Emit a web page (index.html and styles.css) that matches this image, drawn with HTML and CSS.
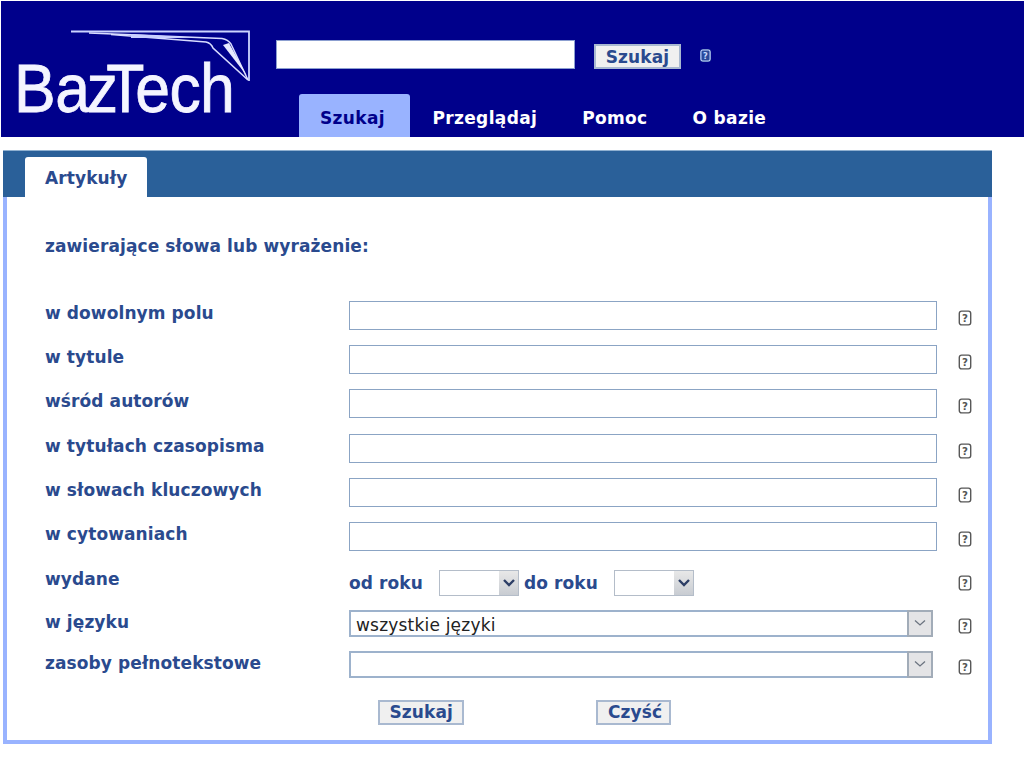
FILE: index.html
```html
<!DOCTYPE html>
<html lang="pl">
<head>
<meta charset="utf-8">
<title>BazTech</title>
<link rel="stylesheet" href="styles.css">
</head>
<body>
<svg class="defs" width="0" height="0" aria-hidden="true"><defs>
<symbol id="help" viewBox="0 0 12 14"><rect x="1" y="1" width="10" height="12" rx="2" fill="none" stroke="currentColor" stroke-width="1.2"/><text x="6" y="10.5" text-anchor="middle" class="help-q" fill="currentColor">?</text></symbol>
</defs></svg>
<header class="top">
  <svg class="logo" width="262" height="136" viewBox="0 0 262 136">
    <path d="M70 30.5H248V80" fill="none" stroke="#ccd4ff" stroke-width="1.8"/>
    <path d="M88 32L221 37.5Q227 38.5 230 43L247 79" fill="none" stroke="#d8dcff" stroke-width="1.5"/>
    <path d="M110 33.5L205 41Q210 42 212 47L247 79" fill="none" stroke="#d8dcff" stroke-width="1.6"/>
    <path d="M222 44L228 42L246 75Z" fill="#e8eaff"/>
    <path d="M130 33L200 37L130 37Z" fill="#c8ceff"/>
    <text transform="translate(13 111) scale(.92 1)" dx="0 -0.6 -3.6 -12.6 -10.2 -0.5 -1" class="logo-text">BazTech</text>
  </svg>
  <div class="top-main">
    <form class="quick">
      <input class="quick-input" type="text">
      <button class="btn" type="button">Szukaj</button>
      <svg class="help help-top"><use href="#help"/></svg>
    </form>
    <nav class="nav">
      <a class="nav-item active">Szukaj</a>
      <a class="nav-item">Przeglądaj</a>
      <a class="nav-item">Pomoc</a>
      <a class="nav-item">O bazie</a>
    </nav>
  </div>
</header>
<main class="panel">
  <div class="tabs"><a class="tab">Artykuły</a></div>
  <form class="body">
    <h2 class="lead">zawierające słowa lub wyrażenie:</h2>
    <div class="rows">
      <label class="lbl">w dowolnym polu</label><input class="field" type="text"><svg class="help"><use href="#help"/></svg>
      <label class="lbl">w tytule</label><input class="field" type="text"><svg class="help"><use href="#help"/></svg>
      <label class="lbl">wśród autorów</label><input class="field" type="text"><svg class="help"><use href="#help"/></svg>
      <label class="lbl">w tytułach czasopisma</label><input class="field" type="text"><svg class="help"><use href="#help"/></svg>
      <label class="lbl">w słowach kluczowych</label><input class="field" type="text"><svg class="help"><use href="#help"/></svg>
      <label class="lbl">w cytowaniach</label><input class="field" type="text"><svg class="help"><use href="#help"/></svg>
    </div>
    <div class="rows rows-low">
      <label class="lbl lbl-yr">wydane</label>
      <div class="years">
        <span class="yr-lbl">od roku</span>
        <div class="sel sel-yr"><select class="native"><option></option></select><span class="arrow-yr"><svg width="14" height="9" viewBox="0 0 14 9"><path d="M2 2L7 7L12 2" fill="none" stroke="#2c3e66" stroke-width="2.4"/></svg></span></div>
        <span class="yr-lbl">do roku</span>
        <div class="sel sel-yr"><select class="native"><option></option></select><span class="arrow-yr"><svg width="14" height="9" viewBox="0 0 14 9"><path d="M2 2L7 7L12 2" fill="none" stroke="#2c3e66" stroke-width="2.4"/></svg></span></div>
      </div>
      <svg class="help"><use href="#help"/></svg>
      <label class="lbl">w języku</label>
      <div class="sel sel-wide"><select class="native"><option>wszystkie języki</option></select><span class="arrow-wide"><svg width="14" height="8" viewBox="0 0 14 8"><path d="M2 1.5L7 6L12 1.5" fill="none" stroke="#6c7480" stroke-width="1.3"/></svg></span></div>
      <svg class="help help-low"><use href="#help"/></svg>
      <label class="lbl">zasoby pełnotekstowe</label>
      <div class="sel sel-wide"><select class="native"><option></option></select><span class="arrow-wide"><svg width="14" height="8" viewBox="0 0 14 8"><path d="M2 1.5L7 6L12 1.5" fill="none" stroke="#6c7480" stroke-width="1.3"/></svg></span></div>
      <svg class="help help-low"><use href="#help"/></svg>
    </div>
    <div class="actions">
      <button class="btn" type="button">Szukaj</button>
      <button class="btn btn-clear" type="button">Czyść</button>
    </div>
  </form>
</main>
</body>
</html>
```
FILE: styles.css
```css
* { box-sizing: border-box; }
html, body { margin: 0; padding: 0; }
body { background: #fff; padding: 1px 0 0 1px; font-family: "DejaVu Sans", Verdana, sans-serif; height: 770px; overflow: hidden; }
.defs { position: absolute; }
.top { display: flex; height: 136px; background: #00008b; }
.logo { flex: none; display: block; margin-right: 13px; }
.logo-text { font-family: "Liberation Sans", Arial, sans-serif; font-size: 68px; font-kerning: none; fill: #f4f5ff; stroke: #f4f5ff; stroke-width: .8px; }
.top-main { flex: 1; display: flex; flex-direction: column; }
.quick { display: flex; padding-top: 39px; height: 93px; }
.quick-input { width: 299px; height: 29px; background: #fff; border: 1px solid #8c9fd0; padding: 0; margin-right: 19px; }
.quick .btn { margin-top: 4px; width: 87px; height: 25px; padding: 0; }
.help { width: 14px; height: 16px; color: #555; display: block; }
.help-q { font: bold 9px "DejaVu Sans", sans-serif; }
.help-top { margin: 9px 0 0 19px; color: #c8d8ff; background: #2a4a9a; border-radius: 3px; width: 11px; height: 13px; }
.nav { display: flex; padding-left: 23px; height: 43px; }
.nav-item { font-weight: bold; font-size: 17px; letter-spacing: .35px; color: #fff; padding: 14px 22.5px 0; }
.nav-item.active { background: #99b3ff; color: #00008b; border-radius: 3px 3px 0 0; padding: 14px 25px 0 21px; }
.btn { font: bold 17px "DejaVu Sans", sans-serif; letter-spacing: .1px; color: #2a4a8e; background: #f0f0f0; border: 2px solid #a9b9d0; padding: 0 9.5px; height: 25px; }
.btn-clear { padding-right: 6.5px; }
.panel { width: 989px; margin: 13px 0 0 2px; height: 594px; border: solid #99b3ff; border-width: 0 4px 4px; display: flex; flex-direction: column; background: #fff; }
.tabs { margin: 0 -4px; height: 47px; background: #2a6099; padding: 6px 0 0 22px; display: flex; border-top: 1px solid #8fb0d0; }
.tab { width: 122px; height: 40px; background: #fff; border-radius: 3px 3px 0 0; color: #2a4a8e; font-weight: bold; font-size: 17px; letter-spacing: .1px; padding: 11px 0 0 20px; }
.body { flex: 1; padding: 0 0 0 38px; display: flex; flex-direction: column; }
.lead { margin: 0; padding-top: 40px; height: 104px; font-size: 17px; font-weight: bold; letter-spacing: .1px; color: #2a4a8e; line-height: 18px; }
.rows { display: grid; grid-template-columns: 304px 588px 14px; column-gap: 0; row-gap: 15.2px; align-items: start; }
.rows .help { margin: 9px 0 0 21px; }
.lbl { font-size: 17px; font-weight: bold; letter-spacing: .1px; color: #2a4a8e; line-height: 18px; padding-top: 3px; }
.lbl-yr { padding-top: 0; }
.field { width: 588px; height: 29px; border: 1px solid #8ba4c4; background: #fff; padding: 0; }
.rows-low { margin-top: 19px; row-gap: 14px; }
.rows-low .help { margin-top: 5px; }
.rows-low .help-low { margin-top: 8px; }
.years { display: flex; align-items: center; height: 26px; }
.yr-lbl { font-size: 17px; font-weight: bold; letter-spacing: .1px; color: #2a4a8e; width: 90px; }
.sel { position: relative; }
.sel-yr { width: 80px; height: 26px; margin-right: 5px; }
.native { appearance: none; -webkit-appearance: none; display: block; width: 100%; height: 100%; background: #fff; border: 1px solid #b4bdc9; border-radius: 0; font: 17px "DejaVu Sans", sans-serif; letter-spacing: .2px; color: #222; padding: 3px 0 0 5px; }
.arrow-yr { position: absolute; top: 1px; right: 1px; bottom: 1px; width: 19px; background: linear-gradient(#e8e8e8, #c8ccd2); display: flex; align-items: center; justify-content: center; }
.sel-wide { width: 584px; height: 27px; }
.sel-wide .native { border: 2px solid #9db2cc; }
.arrow-wide { position: absolute; top: 0; right: 0; bottom: 0; width: 26px; background: #e4e4e6; border: 2px solid #a2acb8; display: flex; align-items: center; justify-content: center; }
.actions { display: flex; padding: 22px 0 0 333px; gap: 132px; }
.actions .btn { height: 25px; }
```
